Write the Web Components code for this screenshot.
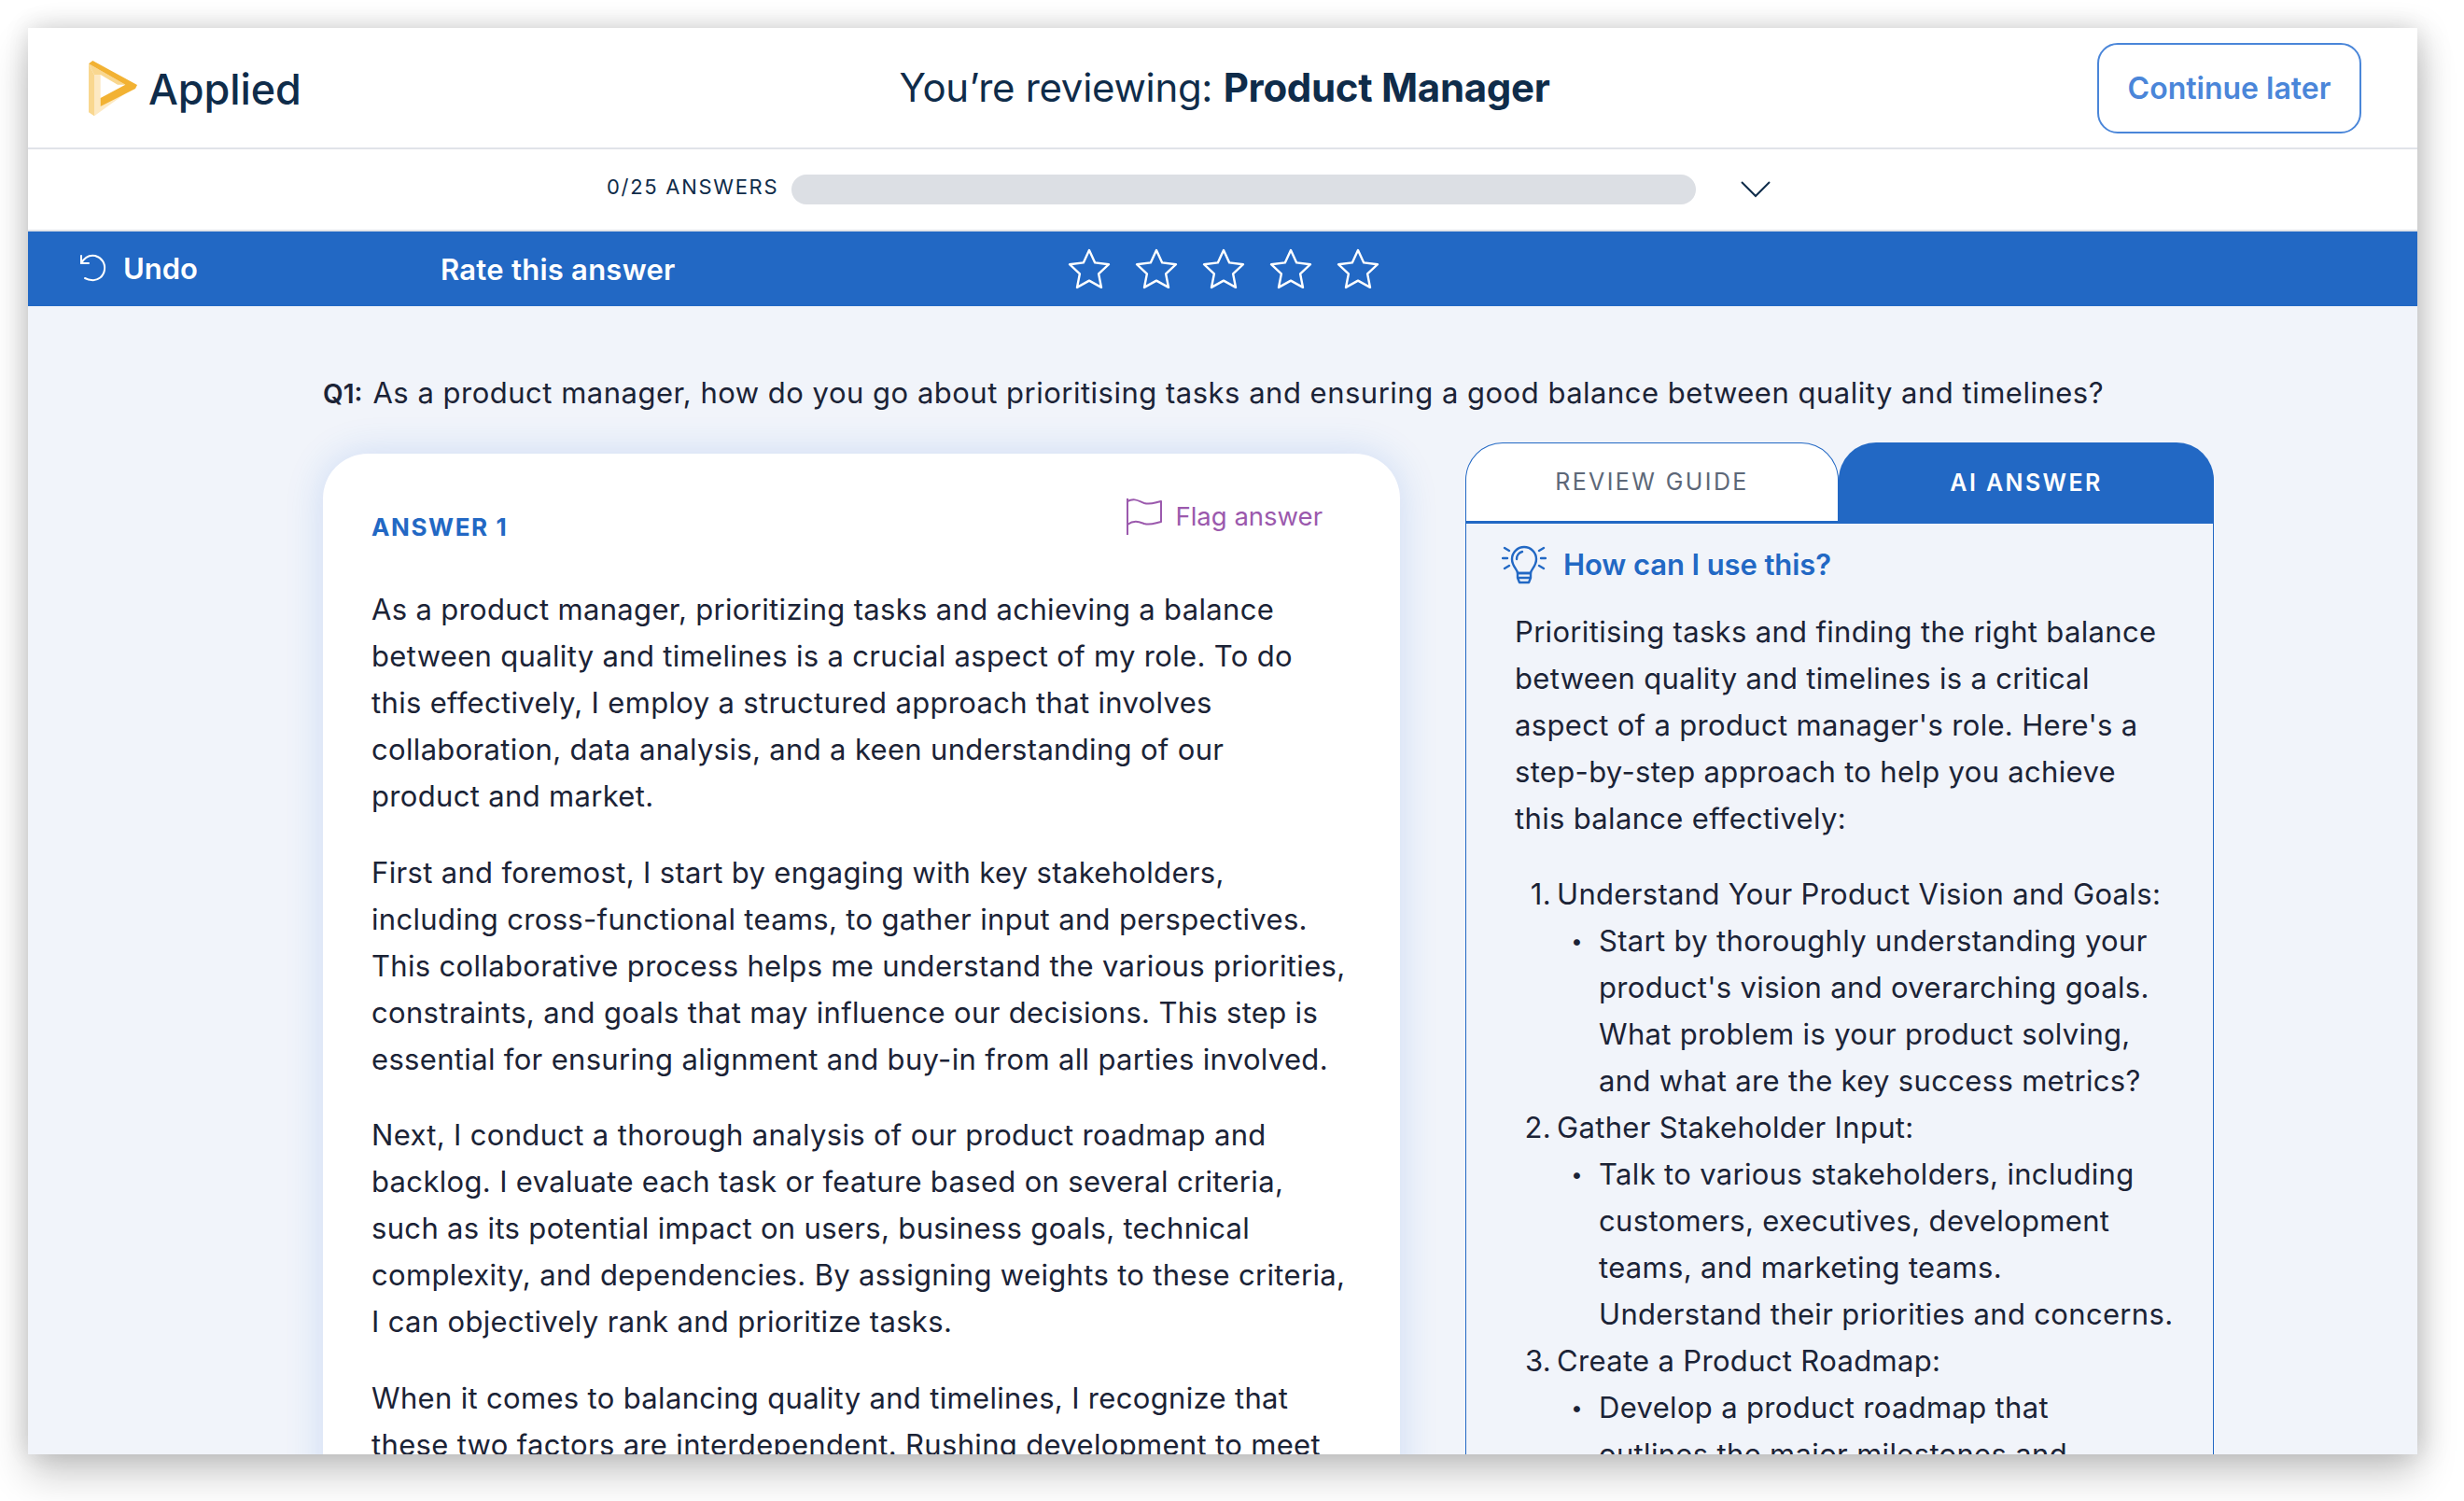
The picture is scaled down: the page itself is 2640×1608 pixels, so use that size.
<!DOCTYPE html>
<html>
<head>
<meta charset="utf-8">
<title>Applied review</title>
<style>
html,body{margin:0;background:#fff;font-family:Inter,"Liberation Sans",sans-serif;}
body{padding:30px 50px 50px 30px;}
p{margin:0;}
</style>
</head>
<body>
<app-frame>
  <app-header slot="head"></app-header>
  <progress-row slot="head" label="0/25 ANSWERS"></progress-row>
  <rate-bar slot="head"></rate-bar>
  <question-line num="Q1:">As a product manager, how do you go about prioritising tasks and ensuring a good balance between quality and timelines?</question-line>
  <answer-card title="ANSWER 1">
    <p>As a product manager, prioritizing tasks and achieving a balance<br>between quality and timelines is a crucial aspect of my role. To do<br>this effectively, I employ a structured approach that involves<br>collaboration, data analysis, and a keen understanding of our<br>product and market.</p>
    <p>First and foremost, I start by engaging with key stakeholders,<br>including cross-functional teams, to gather input and perspectives.<br>This collaborative process helps me understand the various priorities,<br>constraints, and goals that may influence our decisions. This step is<br>essential for ensuring alignment and buy-in from all parties involved.</p>
    <p>Next, I conduct a thorough analysis of our product roadmap and<br>backlog. I evaluate each task or feature based on several criteria,<br>such as its potential impact on users, business goals, technical<br>complexity, and dependencies. By assigning weights to these criteria,<br>I can objectively rank and prioritize tasks.</p>
    <p>When it comes to balancing quality and timelines, I recognize that<br>these two factors are interdependent. Rushing development to meet</p>
  </answer-card>
  <side-panel>
    <p class="intro">Prioritising tasks and finding the right balance<br>between quality and timelines is a critical<br>aspect of a product manager's role. Here's a<br>step-by-step approach to help you achieve<br>this balance effectively:</p>
    <step-item num="1." text="Understand Your Product Vision and Goals:">Start by thoroughly understanding your<br>product's vision and overarching goals.<br>What problem is your product solving,<br>and what are the key success metrics?</step-item>
    <step-item num="2." text="Gather Stakeholder Input:">Talk to various stakeholders, including<br>customers, executives, development<br>teams, and marketing teams.<br>Understand their priorities and concerns.</step-item>
    <step-item num="3." text="Create a Product Roadmap:">Develop a product roadmap that<br>outlines the major milestones and</step-item>
  </side-panel>
</app-frame>

<script>
function define(name, html, setup) {
	let tmpl = document.createElement('template');
	tmpl.innerHTML = html;
	customElements.define(name, class extends HTMLElement {
		constructor() {
			super();
			this.attachShadow({mode: 'open'}).appendChild(tmpl.content.cloneNode(true));
		}
		connectedCallback() {
			if (setup) setup(this, this.shadowRoot);
		}
	});
}

define('app-frame', `
<style>
:host{display:block;width:2560px;height:1528px;background:#f1f4fa;overflow:hidden;
	box-shadow:0 22px 40px rgba(0,0,0,.2),8px 0 30px rgba(0,0,0,.1),-4px -4px 24px rgba(0,0,0,.07);}
.main{display:grid;grid-template-columns:1154px 802px;column-gap:70px;padding:0 0 0 316px;}
</style>
<slot name="head"></slot>
<div class="main"><slot></slot></div>
`);

define('app-header', `
<style>
:host{display:grid;grid-template-columns:1fr auto 1fr;align-items:center;height:128px;background:#fff;
	border-bottom:2px solid #e1e3e9;padding:0 60px 0 64px;color:#0f2c4a;}
.logo{display:flex;align-items:center;gap:11px;font-size:45px;font-weight:500;letter-spacing:-.1px;position:relative;top:1px;}
.logo svg{width:54px;height:60px;display:block;}
.title{font-size:42px;letter-spacing:-.3px;position:relative;top:-1px;}
b{font-weight:700;}
button{justify-self:end;width:283px;height:97px;box-sizing:border-box;border:2px solid #4a86d9;border-radius:22px;background:#fff;
	color:#4a86d9;font:600 32px Inter,sans-serif;letter-spacing:0;padding:0;}
</style>
<div class="logo">
	<svg viewBox="72 60 156 180">
		<polygon points="72,70 90,105 90,238 72,226" fill="#f9d78f"/>
		<polygon points="90,105 110,105 110,206 205,148 228,138 90,238" fill="#fde9c2"/>
		<polygon points="72,70 190,137 165,137 110,105 90,105" fill="#f9d78f"/>
		<polygon points="72,70 85,60 228,138 222,150 110,207 110,180 190,137" fill="#f2b233"/>
	</svg>
	<span>Applied</span>
</div>
<div class="title">You’re reviewing: <b>Product Manager</b></div>
<button>Continue later</button>
`);

define('progress-row', `
<style>
:host{display:flex;align-items:center;height:86px;background:#fff;border-bottom:2px solid #e1e3e9;padding-left:620px;color:#0f2c4a;}
.lab{font-size:22px;letter-spacing:1.7px;width:198px;white-space:nowrap;position:relative;top:-3px;}
.bar{width:969px;height:32px;border-radius:16px;background:#dcdfe4;}
svg{width:32px;height:18px;margin-left:48px;}
</style>
<span class="lab"></span>
<div class="bar"></div>
<svg viewBox="0 0 32 18" fill="none" stroke="#0f2c4a" stroke-width="2"><path d="M1 1 L16 16 L31 1"/></svg>
`, (el, root) => { root.querySelector('.lab').textContent = el.getAttribute('label'); });

let star = '<svg viewBox="0 0 48 46" fill="none" stroke="#fff" stroke-width="2.4" stroke-linejoin="round"><path d="M24 3 L30.2 16.4 L45 18.2 L34.1 28.3 L37 42.9 L24 35.6 L11 42.9 L13.9 28.3 L3 18.2 L17.8 16.4 Z"/></svg>';

define('rate-bar', `
<style>
:host{display:flex;align-items:center;height:80px;background:#2268c4;color:#fff;font-size:31px;font-weight:600;position:relative;}
.undo{display:flex;align-items:center;gap:16px;width:442px;padding-left:54px;box-sizing:border-box;font-weight:600;position:relative;top:-1px;}
.undo svg{width:32px;height:32px;}
.rate{width:671px;letter-spacing:.25px;}
.stars{display:flex;gap:24px;}
.stars svg{width:48px;height:46px;display:block;}
</style>
<div class="undo">
	<svg viewBox="0 0 32 32" fill="none" stroke="#fff" stroke-width="2" stroke-linecap="round" stroke-linejoin="round"><path d="M3 3 V11 H11"/><path d="M3 11 C7 4 13 2 18 3 C25 5 29 11 28 18 C27 25 21 30 14 29 C11 29 9 28 7 27"/></svg>
	<span>Undo</span>
</div>
<div class="rate">Rate this answer</div>
<div class="stars">${star.repeat(5)}</div>
`);

define('question-line', `
<style>
:host{display:flex;grid-column:1 / 3;align-items:baseline;gap:11px;height:146px;box-sizing:border-box;padding-top:74px;
	font-size:31px;line-height:38px;color:#1b2336;white-space:nowrap;}
b{font-weight:600;font-size:28px;}
span{letter-spacing:.5px;}
</style>
<b></b><span><slot></slot></span>
`, (el, root) => { root.querySelector('b').textContent = el.getAttribute('num'); });

define('answer-card', `
<style>
:host{display:block;margin-top:12px;background:#fff;border-radius:48px 48px 0 0;padding:59px 30px 0 52px;height:1200px;
	box-shadow:0 0 40px rgba(40,110,220,.18);}
.top{display:flex;justify-content:space-between;align-items:flex-start;height:83px;}
.name{color:#2268c4;font-size:26px;font-weight:700;letter-spacing:1.6px;margin-top:4px;}
.flag{display:flex;align-items:center;gap:13px;color:#9b59ad;font-size:27.5px;margin:-13px 53px 0 0;}
.flag svg{width:40px;height:42px;}
.body{font-size:31px;line-height:50px;color:#1b2336;white-space:nowrap;letter-spacing:.33px;}
::slotted(p){margin:0 0 31.5px !important;}
</style>
<div class="top">
	<div class="name"></div>
	<div class="flag">
		<svg viewBox="0 0 40 42" fill="none" stroke="#9b59ad" stroke-width="2" stroke-linejoin="round"><path d="M2 2 V41"/><path d="M2 5 C10 1 14 5 20 7 C27 9 32 6 38 5 V27 C32 28 27 31 20 29 C14 27 9 25 2 30"/></svg>
		<span>Flag answer</span>
	</div>
</div>
<div class="body"><slot></slot></div>
`, (el, root) => { root.querySelector('.name').textContent = el.getAttribute('title'); el.removeAttribute('title'); });

define('side-panel', `
<style>
:host{display:block;font-size:31px;line-height:50px;color:#1b2336;white-space:nowrap;letter-spacing:.33px;}
.tabs{display:grid;grid-template-columns:400px 402px;height:84px;font-size:25px;letter-spacing:2.4px;text-align:center;}
.tab{border-radius:40px 40px 0 0;box-sizing:border-box;}
.off{background:#fff;color:#5d6878;border:1.5px solid #2268c4;border-bottom:3px solid #2268c4;font-weight:400;line-height:83px;}
.on{background:#2268c4;color:#fff;font-weight:600;line-height:86px;}
.box{border:solid #2268c4;border-width:0 1.5px;padding:22px 0 0 52px;height:1200px;box-sizing:border-box;}
.how{display:flex;align-items:center;gap:18px;margin:0 0 22px -14px;color:#2268c4;font-size:31px;font-weight:600;height:50px;letter-spacing:-.1px;}
.how svg{width:48px;height:48px;display:block;flex:none;}
::slotted(.intro){margin:0 0 31px !important;}
</style>
<div class="tabs">
	<div class="tab off">REVIEW GUIDE</div>
	<div class="tab on">AI ANSWER</div>
</div>
<div class="box">
	<div class="how">
		<svg viewBox="0 0 48 48" fill="none" stroke="#2268c4" stroke-width="2.4" stroke-linecap="round" stroke-linejoin="round">
			<path d="M17 33 C17 29 11 26 11 18 A13 13 0 0 1 37 18 C37 26 31 29 31 33 Z"/>
			<path d="M17 33 H31 V38 H17 Z M17 38 L19 43 H29 L31 38"/>
			<path d="M16 18 A8 8 0 0 1 22 10"/>
			<path d="M1 17 H6 M42 17 H47 M3 6 L8 9 M45 6 L40 9 M3 28 L8 25 M45 28 L40 25"/>
		</svg>
		<span>How can I use this?</span>
	</div>
	<slot></slot>
</div>
`);

define('step-item', `
<style>
:host{display:block;}
.h{display:flex;}
.n{width:45px;box-sizing:border-box;text-align:right;padding-right:6px;}
.sub{display:flex;}
.dot{width:90px;box-sizing:border-box;text-align:right;padding-right:17px;font-size:22px;}
</style>
<div class="h"><span class="n"></span><span class="t"></span></div>
<div class="sub"><span class="dot">•</span><span><slot></slot></span></div>
`, (el, root) => {
	root.querySelector('.n').textContent = el.getAttribute('num');
	root.querySelector('.t').textContent = el.getAttribute('text');
});
</script>
</body>
</html>
